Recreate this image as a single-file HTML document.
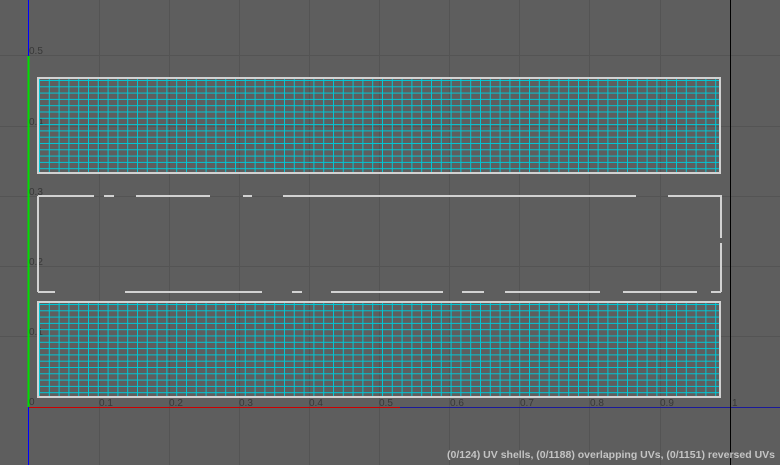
<!DOCTYPE html>
<html><head><style>
html,body{margin:0;padding:0;background:#5e5e5e;width:780px;height:465px;overflow:hidden}
svg{position:absolute;left:0;top:0}
.l{font-family:"Liberation Sans",sans-serif;font-size:10px;fill:#383838}
.s{font-family:"Liberation Sans",sans-serif;font-size:10.5px;font-weight:bold;fill:#c4c4c4}
</style></head><body>
<svg width="780" height="465" xmlns="http://www.w3.org/2000/svg" shape-rendering="crispEdges">
<defs>
<pattern id="m" x="39" y="80" width="9.8" height="6.3" patternUnits="userSpaceOnUse">
<rect x="0" y="0" width="1" height="6.3" fill="#00c8d6"/>
<rect x="0" y="0" width="9.8" height="1" fill="#00c8d6"/>
</pattern>
<pattern id="m2" x="39" y="304" width="9.8" height="6.3" patternUnits="userSpaceOnUse">
<rect x="0" y="0" width="1" height="6.3" fill="#00c8d6"/>
<rect x="0" y="0" width="9.8" height="1" fill="#00c8d6"/>
</pattern>
</defs>
<rect width="780" height="465" fill="#5e5e5e"/>
<g stroke="#545454" stroke-width="1">
<line x1="99.5" y1="0" x2="99.5" y2="465"/><line x1="169.5" y1="0" x2="169.5" y2="465"/>
<line x1="239.5" y1="0" x2="239.5" y2="465"/><line x1="309.5" y1="0" x2="309.5" y2="465"/>
<line x1="379.5" y1="0" x2="379.5" y2="465"/><line x1="449.5" y1="0" x2="449.5" y2="465"/>
<line x1="519.5" y1="0" x2="519.5" y2="465"/><line x1="589.5" y1="0" x2="589.5" y2="465"/>
<line x1="660.5" y1="0" x2="660.5" y2="465"/>
<line x1="0" y1="55.5" x2="780" y2="55.5"/><line x1="0" y1="126.5" x2="780" y2="126.5"/>
<line x1="0" y1="196.5" x2="780" y2="196.5"/><line x1="0" y1="266.5" x2="780" y2="266.5"/>
<line x1="0" y1="336.5" x2="780" y2="336.5"/>
</g>
<text class="l" x="29" y="54">0.5</text><text class="l" x="29" y="125">0.4</text>
<text class="l" x="29" y="195">0.3</text><text class="l" x="29" y="265">0.2</text>
<text class="l" x="29" y="335">0.1</text><text class="l" x="29" y="405">0</text>
<text class="l" x="99" y="406">0.1</text><text class="l" x="169" y="406">0.2</text>
<text class="l" x="239" y="406">0.3</text><text class="l" x="309" y="406">0.4</text>
<text class="l" x="379" y="406">0.5</text><text class="l" x="450" y="406">0.6</text>
<text class="l" x="520" y="406">0.7</text><text class="l" x="590" y="406">0.8</text>
<text class="l" x="660" y="406">0.9</text><text class="l" x="732" y="406">1</text>
<rect x="39" y="79" width="680" height="93" fill="url(#m)"/>
<rect x="39" y="303" width="680" height="93" fill="url(#m2)"/>
<g fill="none" stroke="#d2d2d2" stroke-width="2">
<rect x="38" y="78" width="682" height="95"/>
<rect x="38" y="302" width="682" height="95"/>
<path d="M38 196V292M38 196H94M104 196H114M136 196H210M243 196H252M283 196H636M668 196H721V238M721 243V292M38 292H55M125 292H262M292 292H302M331 292H443M462 292H484M505 292H600M623 292H697M711 292H721"/>
</g>
<line x1="28" y1="407.5" x2="400" y2="407.5" stroke="#cc0000" stroke-width="1"/>
<line x1="400" y1="407.5" x2="780" y2="407.5" stroke="#1a1a9a" stroke-width="1"/>
<line x1="28.5" y1="0" x2="28.5" y2="56" stroke="#0000ff" stroke-width="1.3"/>
<line x1="28.5" y1="407" x2="28.5" y2="465" stroke="#0000ff" stroke-width="1.3"/>
<line x1="28.5" y1="56" x2="28.5" y2="407" stroke="#00dd00" stroke-width="2"/>
<line x1="730.5" y1="0" x2="730.5" y2="465" stroke="#000" stroke-width="1"/>
<text class="s" x="775" y="458" text-anchor="end">(0/124) UV shells, (0/1188) overlapping UVs, (0/1151) reversed UVs</text>
</svg>
</body></html>
